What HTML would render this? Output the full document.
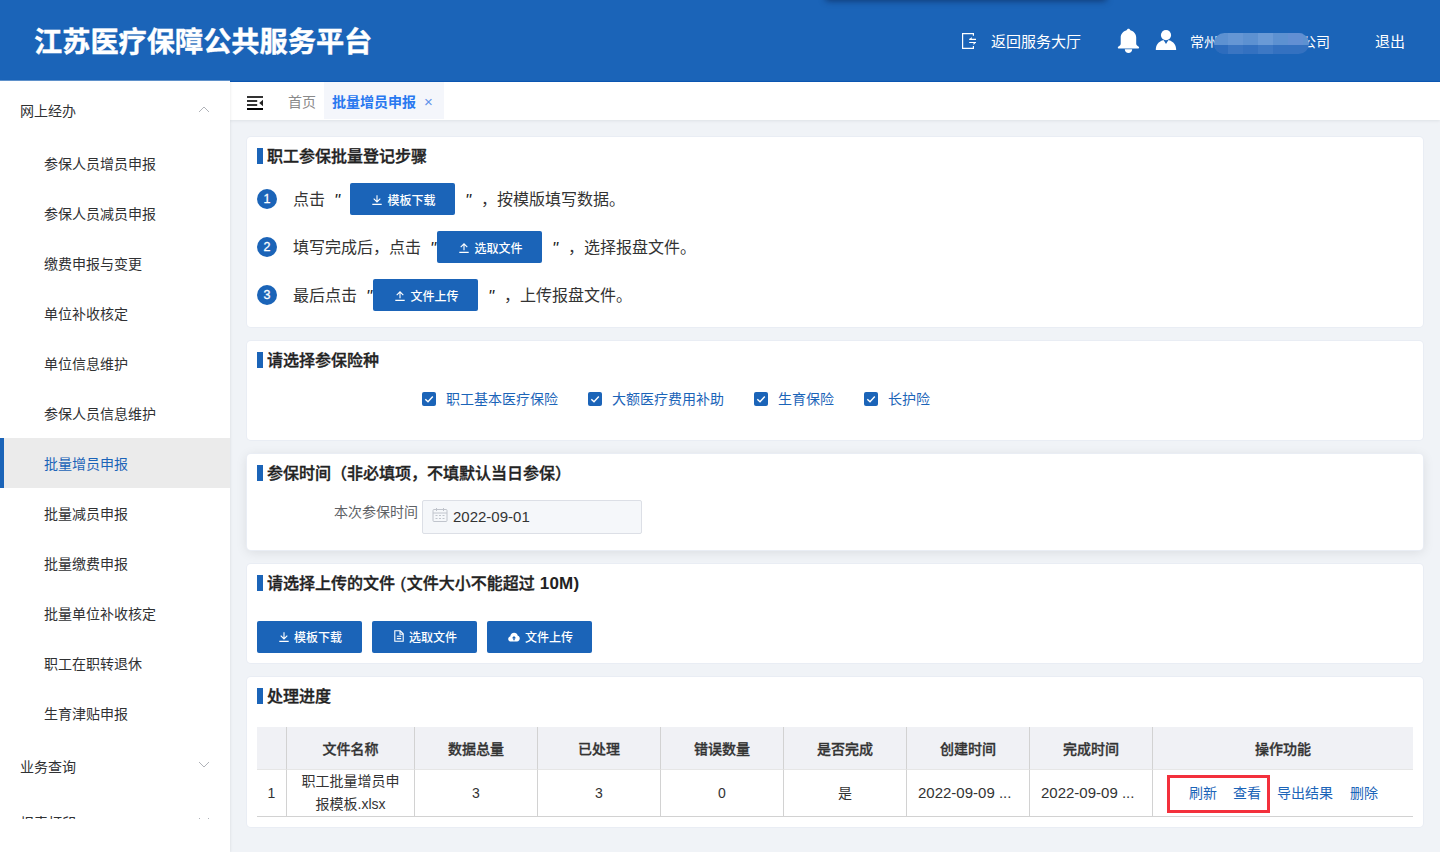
<!DOCTYPE html>
<html lang="zh-CN">
<head>
<meta charset="utf-8">
<title>江苏医疗保障公共服务平台</title>
<style>
*{box-sizing:border-box;margin:0;padding:0}
html,body{width:1440px;height:852px;overflow:hidden}
body{text-spacing-trim:space-all;font-family:"Liberation Sans","Noto Sans CJK SC",sans-serif;font-size:14px;color:#333;background:#f0f3f7;position:relative}
.abs{position:absolute}
/* header */
#hd{position:absolute;left:0;top:0;width:1440px;height:82px;background:#1b64b8;border-bottom:1px solid #0c57b4;color:#fff;z-index:2}
#hd .ttl{position:absolute;left:34px;top:22px;-webkit-text-stroke:.4px #fff;font-size:28.2px;line-height:40px;font-weight:700;letter-spacing:0;white-space:nowrap}
#hd .nav{position:absolute;top:0;height:81px;line-height:84px;font-size:15px;white-space:nowrap}
#topshadow{position:absolute;left:826px;top:-12px;width:280px;height:12px;background:#123;box-shadow:0 0 6px 1px rgba(10,30,70,.6);border-radius:3px}
/* sidebar */
#sb{position:absolute;left:0;top:81px;width:230px;height:771px;background:#fff;z-index:3;box-shadow:0 -1px 0 rgba(255,255,255,.3), 1px 0 2px rgba(0,0,0,.06)}
#menu{position:absolute;left:0;top:0;width:230px;height:738px;overflow:hidden;padding-top:1px}
.mt{position:relative;height:56px;line-height:58px;padding-left:20px;font-size:14px;color:#303133}
.mt svg{position:absolute;left:198px;top:23px}
.mi{position:relative;height:50px;line-height:52px;padding-left:44px;font-size:14px;color:#303133}
.mi.on{background:#ebebeb;color:#1b64b8;border-left:4px solid #1b64b8;padding-left:40px}
/* tabs */
#tabs{position:absolute;left:230px;top:82px;width:1210px;height:38px;background:#fff;box-shadow:0 1px 3px rgba(0,21,41,.08);z-index:2}
#tabs .t{position:absolute;top:0;height:38px;line-height:40px;font-size:14px;white-space:nowrap}
/* cards */
.card{position:absolute;left:247px;width:1176px;background:#fff;border-radius:4px;box-shadow:0 0 0 1px #e9edf4}
.ct{position:absolute;left:10px;font-size:16px;font-weight:500;-webkit-text-stroke:.35px #222;color:#222;line-height:20px;padding-left:10px;white-space:nowrap}
.ct:before{content:"";position:absolute;left:0;top:1px;width:6px;height:16px;background:#1b64b8}
.btn{position:absolute;width:105px;height:32px;background:#1b64b8;color:#fff;border-radius:2px;font-size:12px;font-weight:500;line-height:37px;padding-left:2px;text-align:center;white-space:nowrap}
.btn svg{vertical-align:0.5px;margin-right:5px;margin-left:1px}
.num{position:absolute;left:10px;width:20px;height:20px;border-radius:50%;background:#1b64b8;color:#fff;font-size:12.5px;line-height:21px;text-align:center;-webkit-text-stroke:.3px #fff}
.st{position:absolute;font-size:16px;line-height:24px;color:#333;white-space:nowrap}
.cb{position:absolute;top:51px;width:14px;height:14px;background:#1b64b8;border-radius:2px}
.cb svg{position:absolute;left:0;top:0}
.cl{position:absolute;top:47px;font-size:14px;line-height:22px;color:#1b64b8;white-space:nowrap}
.q{display:inline-block;width:16px;height:16px;line-height:16px;vertical-align:baseline;font-family:"Liberation Sans",sans-serif;font-style:italic;font-size:17px;position:relative;top:1px;color:#222}
.qo{text-align:right;padding-right:1px}
.qc{text-align:left}
/* table */
#tb{position:absolute;left:10px;top:50px;width:1156px;height:90px}
.th{position:absolute;top:0;height:43px;line-height:44px;background:#f0f1f5;font-weight:500;-webkit-text-stroke:.3px #333;font-size:14px;color:#333;text-align:center;border-right:1px solid #d2d2d2;border-bottom:1px solid #e6e6e6}
.td{position:absolute;top:43px;height:47px;line-height:46px;font-size:15px;color:#333;text-align:center;border-right:1px solid #d2d2d2;border-bottom:1px solid #d2d2d2;white-space:nowrap}
.lk{position:absolute;top:56px;font-size:14px;line-height:20px;color:#1b64b8;white-space:nowrap}
</style>
</head>
<body>
<div id="hd">
  <div id="topshadow"></div>
  <div class="ttl">江苏医疗保障公共服务平台</div>
  <svg class="abs" style="left:961px;top:32px" width="16" height="18" viewBox="0 0 16 18" fill="none" stroke="#fff" stroke-width="1.200"><path d="M12.400 3.800V1.700H1.600v14.600h10.800v-2.300"/><path d="M8.200 7.400h6.800M8.200 10.500h6.800" stroke-width="1.100"/><path d="M8.300 7.400 10.700 5v2.400zM14.900 10.500 12.500 12.900v-2.400z" fill="#fff" stroke="none"/></svg>
  <div class="nav" style="left:991px">返回服务大厅</div>
  <svg class="abs" style="left:1117px;top:28px" width="23" height="26" viewBox="0 0 23 26" fill="#fff"><path d="M11.500 0.800c-.9 0-1.500.6-1.900 1.500C6.200 3.400 3.700 6 3.700 9.500v6c0 1.200-.5 1.900-1.500 2.400-.9.400-1.400.9-1.400 1.500 0 .6.500 1 1.100 1H21c.6 0 1.100-.4 1.100-1 0-.6-.5-1.100-1.400-1.500-1-.5-1.500-1.200-1.500-2.400v-6c0-3.500-2.400-6.100-5.800-7.200-.4-.9-1-1.500-1.900-1.500z"/><path d="M7.800 21.300h7.400c0 2.100-1.600 3.700-3.700 3.700s-3.700-1.600-3.700-3.700z"/></svg>
  <svg class="abs" style="left:1155px;top:29px" width="22" height="22" viewBox="0 0 22 22" fill="#fff"><circle cx="11" cy="6.100" r="5.100"/><path d="M0.800 20.900C0.800 16 3.500 12.500 8 11.200l.7.100L11 15l2.300-3.700.7-.1c4.500 1.300 7.200 4.800 7.200 9.700z"/></svg>
  <div class="nav" style="left:1190px;font-size:14px">常州</div>
  <div class="nav" style="left:1302px;font-size:14px">公司</div>
  <div class="abs" style="left:1214px;top:33px;width:95px;height:21px;border-radius:11px;background:linear-gradient(#5d91d1 0,#5d91d1 57%,#3471c0 57%,#3471c0 100%);overflow:hidden"><i class="abs" style="left:14px;top:0;width:15px;height:12px;background:#6596d4"></i><i class="abs" style="left:44px;top:0;width:15px;height:12px;background:#6a9ad6"></i><i class="abs" style="left:74px;top:0;width:15px;height:12px;background:#628fd3"></i><i class="abs" style="left:14px;top:12px;width:15px;height:9px;background:#3a75c2"></i><i class="abs" style="left:44px;top:12px;width:15px;height:9px;background:#3d78c4"></i><i class="abs" style="left:0;top:12px;width:14px;height:9px;background:#2d6cbd"></i></div>
  <div class="nav" style="left:1375px">退出</div>

</div>
<div id="sb"><div id="menu">
<div class="mt">网上经办<svg width="12" height="8" viewBox="0 0 12 8" fill="none" stroke="#b0b3b9" stroke-width="1"><path d="M1 7l5-5 5 5"/></svg></div>
<div class="mi">参保人员增员申报</div>
<div class="mi">参保人员减员申报</div>
<div class="mi">缴费申报与变更</div>
<div class="mi">单位补收核定</div>
<div class="mi">单位信息维护</div>
<div class="mi">参保人员信息维护</div>
<div class="mi on">批量增员申报</div>
<div class="mi">批量减员申报</div>
<div class="mi">批量缴费申报</div>
<div class="mi">批量单位补收核定</div>
<div class="mi">职工在职转退休</div>
<div class="mi">生育津贴申报</div>
<div class="mt">业务查询<svg width="12" height="8" viewBox="0 0 12 8" fill="none" stroke="#b0b3b9" stroke-width="1"><path d="M1 1l5 5 5-5"/></svg></div>
<div class="mt">报表打印<svg width="12" height="8" viewBox="0 0 12 8" fill="none" stroke="#b0b3b9" stroke-width="1"><path d="M1 1l5 5 5-5"/></svg></div>
</div></div>
<div id="tabs">
  <svg class="abs" style="left:17px;top:14px" width="16" height="14" viewBox="0 0 16 14" fill="#222"><rect x="0" y="0" width="16" height="2" fill="#333"/><rect x="0" y="4" width="10.200" height="2" fill="#333"/><rect x="0" y="8" width="10.200" height="2" fill="#333"/><rect x="0" y="12" width="16" height="2" fill="#000"/><path d="M16 3.800v6.400L12.200 7z"/></svg>
  <div class="t" style="left:58px;color:#8a8a8a">首页</div>
  <div class="t" style="left:94px;width:120px;height:37px;background:#f4f6fb;color:#2878f0;font-weight:700;padding-left:8px">批量增员申报<span style="font-weight:400;color:#5f93ea;margin-left:8px;font-size:15px;line-height:1;position:relative;top:0px">×</span></div>
</div>

<div class="card" style="top:137px;height:190px">
  <div class="ct" style="top:10px">职工参保批量登记步骤</div>
  <div class="num" style="top:52px">1</div>
  <div class="st" style="left:46px;top:51px">点击<span class="q qo">"</span></div>
  <div class="btn" style="left:103px;top:46px"><svg width="10" height="10" viewBox="0 0 10 10" fill="none" stroke="#fff" stroke-width="1.1"><path d="M5 0.300v6.500M1.700 3.600 5 6.900l3.300-3.300M0.300 9.400h9.400"/></svg>模板下载</div>
  <div class="st" style="left:218px;top:51px"><span class="q qc">"</span>，按模版填写数据。</div>
  <div class="num" style="top:100px">2</div>
  <div class="st" style="left:46px;top:99px">填写完成后，点击<span class="q qo">"</span></div>
  <div class="btn" style="left:190px;top:94px"><svg width="10" height="10" viewBox="0 0 10 10" fill="none" stroke="#fff" stroke-width="1.1"><path d="M5 7.200V0.900M1.700 4.100 5 0.800l3.300 3.300M0.300 9.400h9.400"/></svg>选取文件</div>
  <div class="st" style="left:305px;top:99px"><span class="q qc">"</span>，选择报盘文件。</div>
  <div class="num" style="top:148px">3</div>
  <div class="st" style="left:46px;top:147px">最后点击<span class="q qo">"</span></div>
  <div class="btn" style="left:126px;top:142px"><svg width="10" height="10" viewBox="0 0 10 10" fill="none" stroke="#fff" stroke-width="1.1"><path d="M5 7.200V0.900M1.700 4.100 5 0.800l3.300 3.300M0.300 9.400h9.400"/></svg>文件上传</div>
  <div class="st" style="left:241px;top:147px"><span class="q qc">"</span>，上传报盘文件。</div>
</div>
<div class="card" style="top:341px;height:99px">
  <div class="ct" style="top:10px">请选择参保险种</div>
  <div class="cb" style="left:175px"><svg width="14" height="14" viewBox="0 0 14 14" fill="none" stroke="#fff" stroke-width="1.400"><path d="M3.300 7.200 6 9.800l4.800-5.300"/></svg></div><div class="cl" style="left:199px">职工基本医疗保险</div>
  <div class="cb" style="left:341px"><svg width="14" height="14" viewBox="0 0 14 14" fill="none" stroke="#fff" stroke-width="1.400"><path d="M3.300 7.200 6 9.800l4.800-5.300"/></svg></div><div class="cl" style="left:365px">大额医疗费用补助</div>
  <div class="cb" style="left:507px"><svg width="14" height="14" viewBox="0 0 14 14" fill="none" stroke="#fff" stroke-width="1.400"><path d="M3.300 7.200 6 9.800l4.800-5.300"/></svg></div><div class="cl" style="left:531px">生育保险</div>
  <div class="cb" style="left:617px"><svg width="14" height="14" viewBox="0 0 14 14" fill="none" stroke="#fff" stroke-width="1.400"><path d="M3.300 7.200 6 9.800l4.800-5.300"/></svg></div><div class="cl" style="left:641px">长护险</div>
</div>
<div class="card" style="top:454px;height:96px;box-shadow:0 0 0 1px #e9edf4,0 2px 12px 0 rgba(0,0,0,.1)">
  <div class="ct" style="top:10px">参保时间（非必填项，不填默认当日参保）</div>
  <div class="abs" style="left:0;top:47px;width:171px;text-align:right;font-size:14px;line-height:22px;color:#606266">本次参保时间</div>
  <div class="abs" style="left:175px;top:46px;width:220px;height:34px;background:#f5f7fa;border:1px solid #dcdfe6;border-radius:2px">
    <svg class="abs" style="left:9px;top:6px" width="16" height="16" viewBox="0 0 16 16" fill="none" stroke="#c0c4cc" stroke-width="1"><rect x="1" y="2.500" width="14" height="12" rx="1"/><path d="M1 6h14M4.500 1v3M11.500 1v3M3.500 8.500h2M7 8.500h2M10.500 8.500h2M3.500 11.500h2M7 11.500h2M10.500 11.500h2"/></svg>
    <div class="abs" style="left:30px;top:0;line-height:32px;font-size:15px;color:#333">2022-09-01</div>
  </div>
</div>
<div class="card" style="top:564px;height:99px">
  <div class="ct" style="top:10px">请选择上传的文件<span style="letter-spacing:1px"> (</span>文件大小不能超过<span style="font-size:17px;letter-spacing:.2px;font-weight:700;-webkit-text-stroke:0"> 10M)</span></div>
  <div class="btn" style="left:10px;top:57px;line-height:35px;padding-left:1px"><svg width="10" height="10" viewBox="0 0 10 10" fill="none" stroke="#fff" stroke-width="1.1"><path d="M5 0.300v6.500M1.700 3.600 5 6.900l3.300-3.300M0.300 9.400h9.400"/></svg>模板下载</div>
  <div class="btn" style="left:125px;top:57px;line-height:35px;padding-left:1px"><svg width="10" height="12" viewBox="0 0 10 12" fill="none" stroke="#fff" stroke-width="1.100"><path d="M0.800 0.800h5.400l3 3v7.400H0.800zM6 0.800v3.400h3.200M2.800 6.200h4.400M2.800 8.600h4.400"/></svg>选取文件</div>
  <div class="btn" style="left:240px;top:57px;line-height:35px;padding-left:1px"><svg width="12" height="10" viewBox="0 0 12 10" fill="#fff"><path d="M3 9.500C1.300 9.500 0.200 8.300 0.200 6.900c0-1.200.8-2.200 2-2.500C2.500 2.300 4.100 0.800 6.100 0.800c1.800 0 3.300 1.200 3.700 2.900 1.200.2 2 1.300 2 2.600 0 1.700-1.200 3.200-2.800 3.200z"/><path d="M6 4 3.900 6.300h1.400v2h1.400v-2h1.400z" fill="#1b64b8"/></svg>文件上传</div>
</div>
<div class="card" style="top:677px;height:150px">
  <div class="ct" style="top:10px">处理进度</div>
  <div id="tb">
    <div class="th" style="left:0;width:30px"></div>
    <div class="th" style="left:30px;width:128px">文件名称</div>
    <div class="th" style="left:158px;width:123px">数据总量</div>
    <div class="th" style="left:281px;width:123px">已处理</div>
    <div class="th" style="left:404px;width:123px">错误数量</div>
    <div class="th" style="left:527px;width:123px">是否完成</div>
    <div class="th" style="left:650px;width:123px">创建时间</div>
    <div class="th" style="left:773px;width:123px">完成时间</div>
    <div class="th" style="left:896px;width:260px;border-right:0">操作功能</div>
    <div class="td" style="left:0;width:30px;font-size:14px">1</div>
    <div class="td" style="left:30px;width:128px;line-height:23px;white-space:normal;padding:0 13px;font-size:14px">职工批量增员申报模板.xlsx</div>
    <div class="td" style="left:158px;width:123px;font-size:14px">3</div>
    <div class="td" style="left:281px;width:123px;font-size:14px">3</div>
    <div class="td" style="left:404px;width:123px;font-size:14px">0</div>
    <div class="td" style="left:527px;width:123px;font-size:14px">是</div>
    <div class="td" style="left:650px;width:123px;text-align:left;padding-left:11px">2022-09-09 ...</div>
    <div class="td" style="left:773px;width:123px;text-align:left;padding-left:11px">2022-09-09 ...</div>
    <div class="td" style="left:896px;width:260px;border-right:0"></div>
    <div class="abs" style="left:910px;top:48px;width:103px;height:38px;border:3px solid #f3303c"></div>
    <div class="lk" style="left:932px">刷新</div>
    <div class="lk" style="left:976px">查看</div>
    <div class="lk" style="left:1020px">导出结果</div>
    <div class="lk" style="left:1093px">删除</div>
  </div>
</div>
</body>
</html>
